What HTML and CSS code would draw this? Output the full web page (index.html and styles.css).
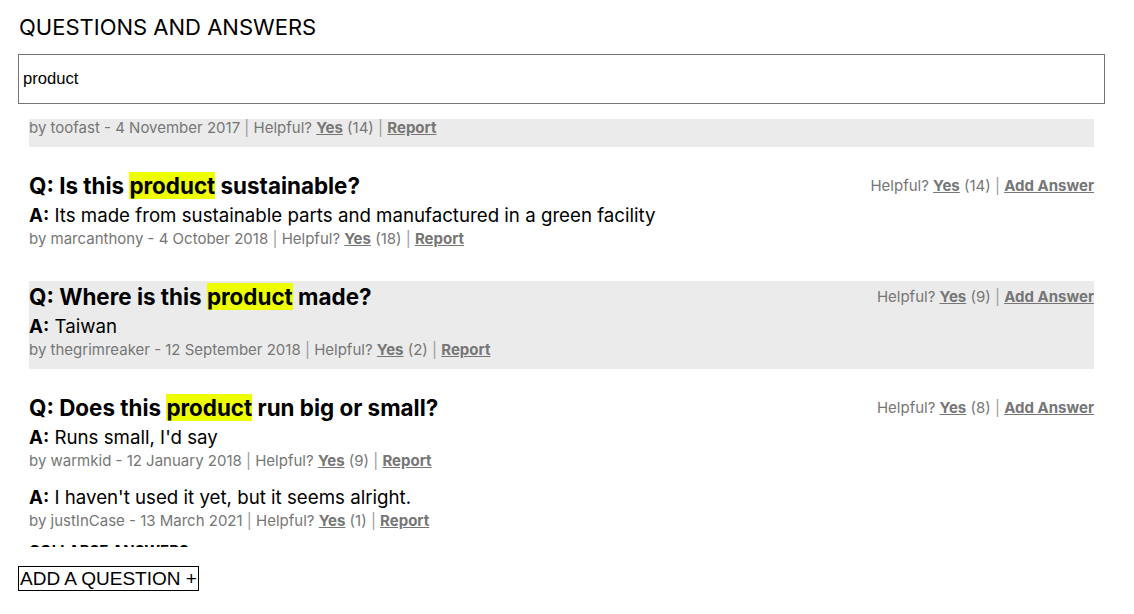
FILE: index.html
```html
<!DOCTYPE html>
<html lang="en">
<head>
<meta charset="utf-8">
<title>Questions and Answers</title>
<link rel="stylesheet" href="styles.css">
</head>
<body>
<section class="qa">
  <h2 class="qa-title">QUESTIONS AND ANSWERS</h2>
  <input class="qa-search" type="text" value="product">
  <div class="qa-list">
    <div class="qa-item shaded partial">
      <div class="answer">
        <div class="meta">by toofast - 4 November 2017 <span class="sep">|</span> Helpful? <a class="link">Yes</a> (14) <span class="sep">|</span> <a class="link">Report</a></div>
      </div>
    </div>

    <div class="qa-item">
      <div class="q-row">
        <div class="question">Q: Is this <mark class="hl">product</mark> sustainable?</div>
        <div class="q-actions">Helpful? <a class="link">Yes</a> (14) <span class="sep">|</span> <a class="link">Add Answer</a></div>
      </div>
      <div class="answer">
        <div class="a-text"><b>A:</b> Its made from sustainable parts and manufactured in a green facility</div>
        <div class="meta">by marcanthony - 4 October 2018 <span class="sep">|</span> Helpful? <a class="link">Yes</a> (18) <span class="sep">|</span> <a class="link">Report</a></div>
      </div>
    </div>

    <div class="qa-item shaded">
      <div class="q-row">
        <div class="question">Q: Where is this <mark class="hl">product</mark> made?</div>
        <div class="q-actions">Helpful? <a class="link">Yes</a> (9) <span class="sep">|</span> <a class="link">Add Answer</a></div>
      </div>
      <div class="answer">
        <div class="a-text"><b>A:</b> Taiwan</div>
        <div class="meta">by thegrimreaker - 12 September 2018 <span class="sep">|</span> Helpful? <a class="link">Yes</a> (2) <span class="sep">|</span> <a class="link">Report</a></div>
      </div>
    </div>

    <div class="qa-item">
      <div class="q-row">
        <div class="question">Q: Does this <mark class="hl">product</mark> run big or small?</div>
        <div class="q-actions">Helpful? <a class="link">Yes</a> (8) <span class="sep">|</span> <a class="link">Add Answer</a></div>
      </div>
      <div class="answer">
        <div class="a-text"><b>A:</b> Runs small, I'd say</div>
        <div class="meta">by warmkid - 12 January 2018 <span class="sep">|</span> Helpful? <a class="link">Yes</a> (9) <span class="sep">|</span> <a class="link">Report</a></div>
      </div>
      <div class="answer">
        <div class="a-text"><b>A:</b> I haven't used it yet, but it seems alright.</div>
        <div class="meta">by justInCase - 13 March 2021 <span class="sep">|</span> Helpful? <a class="link">Yes</a> (1) <span class="sep">|</span> <a class="link">Report</a></div>
      </div>
      <div class="collapse">COLLAPSE ANSWERS</div>
    </div>
  </div>
  <button class="add-question" type="button">ADD A QUESTION +</button>
</section>
</body>
</html>
```
FILE: styles.css
```css
html, body {
  margin: 0;
  padding: 0;
  background: #fff;
}

body {
  font-family: Inter, "Noto Sans", sans-serif;
  color: #000;
}

.qa {
  padding: 14px 29px 0 18px;
  display: flex;
  flex-direction: column;
  align-items: flex-start;
}

.qa-title {
  margin: 0 0 0 1px;
  font-size: 22px;
  font-weight: 400;
  line-height: 26px;
}

.qa-search {
  box-sizing: border-box;
  margin-top: 14px;
  width: 1087px;
  height: 50px;
  border: 1px solid #767676;
  padding: 0 4px;
  font-family: "Liberation Sans", Arial, sans-serif;
  font-size: 16.6px;
  color: #000;
  outline: none;
}

.qa-list {
  margin: 15px 0 0 11px;
  width: 1065px;
  height: 428px;
  overflow: hidden;
}

.qa-item {
  padding: 3px 0 10px;
  margin-bottom: 23px;
}

.qa-item.partial {
  padding-top: 0;
}

.qa-item.shaded {
  background: #ebebeb;
}

.q-row {
  display: flex;
  justify-content: space-between;
  align-items: center;
  margin-bottom: 5px;
}

.question {
  font-size: 22.4px;
  font-weight: 700;
  line-height: 26px;
}

.hl {
  background: #eeff00;
  color: #000;
}

.q-actions {
  font-size: 15px;
  line-height: 18px;
  color: #767676;
}

.answer + .answer {
  margin-top: 16px;
}

.a-text {
  font-size: 18.7px;
  line-height: 23px;
}

.a-text b {
  font-weight: 700;
}

.meta {
  margin-top: 3px;
  font-size: 15px;
  line-height: 18px;
  color: #767676;
}

.partial .meta {
  margin-top: 0;
}

.link {
  color: #767676;
  font-weight: 700;
  text-decoration: underline;
  cursor: pointer;
}

.sep {
  color: #9a9a9a;
}

.collapse {
  margin-top: 12px;
  font-size: 15px;
  font-weight: 700;
  line-height: 18px;
}

.add-question {
  margin-top: 19px;
  padding: 0 1px;
  height: 25px;
  border: 1px solid #000;
  background: #fff;
  color: #000;
  font-family: "Liberation Sans", Arial, sans-serif;
  font-size: 19px;
  line-height: 22px;
}
```
